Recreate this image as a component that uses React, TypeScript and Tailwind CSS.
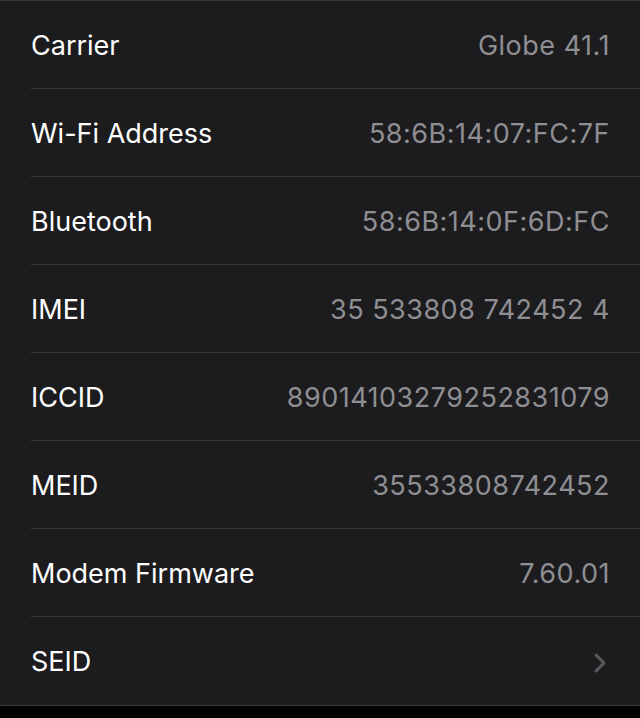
const rows: { label: string; value?: string }[] = [
  { label: "Carrier", value: "Globe 41.1" },
  { label: "Wi-Fi Address", value: "58:6B:14:07:FC:7F" },
  { label: "Bluetooth", value: "58:6B:14:0F:6D:FC" },
  { label: "IMEI", value: "35 533808 742452 4" },
  { label: "ICCID", value: "89014103279252831079" },
  { label: "MEID", value: "35533808742452" },
  { label: "Modem Firmware", value: "7.60.01" },
  { label: "SEID" },
];

export default function App() {
  return (
    <div
      className="w-[640px] h-[718px] bg-black flex flex-col"
      style={{ fontFamily: "Inter, 'Noto Sans', sans-serif" }}
    >
      {/* top hairline */}
      <div className="h-[1px] bg-[#3a3a3c]" />

      <div className="bg-[#1c1c1e] flex flex-col">
        {rows.map((r, i) => (
          <div key={r.label} className="pl-[31px]">
            <div
              className={
                "h-[88px] pt-[3px] flex items-center justify-between pr-[30px] " +
                (i < rows.length - 1 ? "border-b border-[#3a3a3c]" : "")
              }
            >
              <span className="text-[27px] text-white">{r.label}</span>
              {r.value ? (
                <span className="text-[27px] text-[#8e8e93] tracking-[0.5px]">
                  {r.value}
                </span>
              ) : (
                <svg width="14" height="22" viewBox="0 0 14 22" className="mr-[3px]">
                  <path
                    d="M3 3 L11 11 L3 19"
                    fill="none"
                    stroke="#5a5a5e"
                    strokeWidth="3"
                    strokeLinecap="round"
                    strokeLinejoin="round"
                  />
                </svg>
              )}
            </div>
          </div>
        ))}
      </div>

      {/* bottom hairline */}
      <div className="h-[1px] bg-[#3a3a3c]" />
      <div className="flex-1 bg-black" />
    </div>
  );
}
